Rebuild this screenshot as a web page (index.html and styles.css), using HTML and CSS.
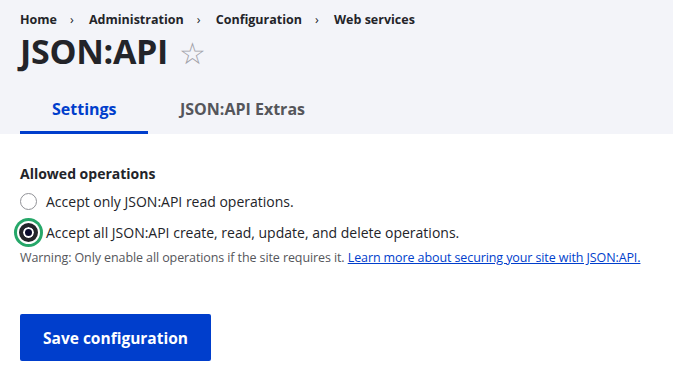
FILE: index.html
```html
<!DOCTYPE html>
<html lang="en">
<head>
  <meta charset="UTF-8" />
  <title>JSON:API</title>
  <link rel="stylesheet" href="styles.css">
</head>
<body>
  <div class="region-header">
    <nav class="breadcrumb">
      <a href="#">Home</a><span class="sep">›</span>
      <a href="#">Administration</a><span class="sep">›</span>
      <a href="#">Configuration</a><span class="sep">›</span>
      <a href="#">Web services</a>
    </nav>
    <h1 class="page-title">JSON:API <span class="star">☆</span></h1>
    <ul class="tabs">
      <li class="tab active"><a href="#">Settings</a></li>
      <li class="tab"><a href="#">JSON:API Extras</a></li>
    </ul>
  </div>
  <form class="content">
    <fieldset class="radios">
      <legend>Allowed operations</legend>
      <label class="option"><span class="radio"></span>Accept only JSON:API read operations.</label>
      <label class="option"><span class="radio checked"></span>Accept all JSON:API create, read, update, and delete operations.</label>
      <div class="description">Warning: Only enable all operations if the site requires it. <a href="#">Learn more about securing your site with JSON:API.</a></div>
    </fieldset>
    <button type="button" class="button">Save configuration</button>
  </form>
</body>
</html>
```

FILE: styles.css
```css
body {
  margin: 0;
  font-family: "Open Sans", "Noto Sans", sans-serif;
  color: #232429;
  background: #fff;
}
a {
  color: inherit;
  text-decoration: none;
}
.region-header {
  background: #f3f4f9;
  padding: 10px 20px 0;
}
.breadcrumb {
  font-size: 12.5px;
  font-weight: 700;
  height: 19px;
  line-height: 19px;
}
.breadcrumb .sep {
  margin: 0 12px 0 13px;
  font-weight: 400;
}
.page-title {
  margin: 2px 0 0;
  font-size: 34px;
  line-height: 40px;
  font-weight: 700;
  letter-spacing: -0.3px;
}
.star {
  font-size: 30px;
  font-weight: 400;
  color: #a0a0a8;
  margin-left: 2px;
}
.tabs {
  list-style: none;
  margin: 19px 0 0;
  padding: 0;
  display: flex;
}
.tab a {
  display: block;
  padding: 0 32px;
  height: 39px;
  line-height: 34px;
  font-size: 16px;
  font-weight: 700;
  color: #55565b;
  border-bottom: 3px solid transparent;
}
.tab.active a {
  width: 64px;
  text-align: center;
  color: #003ecc;
  border-bottom-color: #003ecc;
}
.content {
  padding: 28px 20px;
}
.radios {
  border: 0;
  margin: 0;
  padding: 0;
}
.radios legend {
  padding: 0;
  font-size: 14px;
  font-weight: 700;
  line-height: 24px;
}
.option {
  display: flex;
  align-items: center;
  font-size: 14px;
  height: 31px;
}
.radio {
  width: 17px;
  height: 17px;
  border: 1px solid #919297;
  border-radius: 50%;
  margin-right: 9px;
  box-sizing: border-box;
  background: #fff;
}
.radio.checked {
  width: 19px;
  height: 19px;
  margin-left: -1px;
  margin-right: 8px;
  border: 4px solid #232429;
  background: #0a0b2c;
  box-shadow: inset 0 0 0 2px #fff, 0 0 0 2px #fff, 0 0 0 5px #26a769;
}
.description {
  font-size: 12.5px;
  letter-spacing: -0.1px;
  color: #55565b;
  margin-top: 1px;
}
.description a {
  color: #003ecc;
  text-decoration: underline;
}
.button {
  margin-top: 48px;
  background: #003ecc;
  color: #fff;
  border: 0;
  border-radius: 2px;
  height: 47px;
  padding: 0 23px;
  font-family: inherit;
  font-size: 15.5px;
  font-weight: 700;
}
```
